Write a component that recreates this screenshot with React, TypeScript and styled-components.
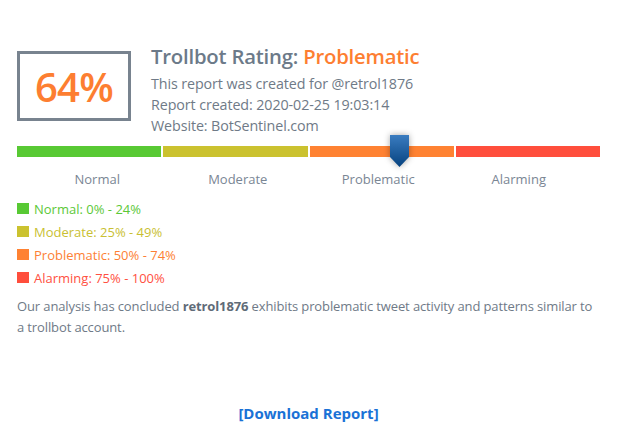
import React from "react";
import styled, { createGlobalStyle } from "styled-components";

const Global = createGlobalStyle`
  html, body { margin: 0; padding: 0; background: #ffffff; }
  body { font-family: "Open Sans", "Noto Sans", Arial, sans-serif; }
`;

const Page = styled.div`
  width: 619px;
  height: 447px;
  box-sizing: border-box;
  padding: 44px 19px 0 17px;
  background: #fff;
  color: #6f7a87;
`;

const Header = styled.div`
  display: flex;
  align-items: flex-start;
  gap: 20px;
`;

const ScoreBox = styled.div`
  margin-top: 7px;
  width: 114px;
  height: 70px;
  box-sizing: border-box;
  border: 3px solid #78838f;
  display: flex;
  align-items: center;
  justify-content: center;
  color: #fd7e31;
  font-size: 40px;
  font-weight: 600;
  letter-spacing: -0.8px;
`;

const Info = styled.div`
  display: flex;
  flex-direction: column;
`;

const Title = styled.div`
  font-size: 20.3px;
  line-height: 24px;
  font-weight: 600;
  color: #6c7a89;
  margin-bottom: 5px;
  letter-spacing: -0.2px;
`;

const Accent = styled.span`
  color: #fd7e31;
`;

const InfoLine = styled.div`
  font-size: 14.3px;
  line-height: 21px;
  color: #6f7a87;
  letter-spacing: -0.1px;
`;

const BarWrap = styled.div`
  position: relative;
  margin-top: 10px;
  display: grid;
  grid-template-columns: repeat(4, 1fr);
  gap: 2px;
  height: 11px;
`;

const Segment = styled.div<{ $c: string }>`
  background: ${(p) => p.$c};
`;

const Marker = styled.svg`
  position: absolute;
  left: 373px;
  top: -11px;
  width: 19px;
  height: 32px;
  overflow: visible;
  filter: drop-shadow(0 0 3px rgba(0, 0, 0, 0.35));
`;

const Labels = styled.div`
  display: grid;
  grid-template-columns: repeat(4, 1fr);
  padding: 0 11px 0 10px;
  margin-top: 12px;
`;

const Label = styled.div`
  text-align: center;
  font-size: 13px;
  line-height: 21px;
  color: #7a8694;
`;

const Legend = styled.div`
  margin-top: 7px;
  display: flex;
  flex-direction: column;
`;

const LegendRow = styled.div<{ $c: string; $t: string }>`
  display: flex;
  align-items: center;
  gap: 5px;
  height: 23px;
  font-size: 13px;
  color: ${(p) => p.$t};
  &::before {
    content: "";
    width: 12px;
    height: 11px;
    background: ${(p) => p.$c};
  }
`;

const Summary = styled.p`
  margin: 7px 0 0;
  font-size: 13px;
  line-height: 21px;
  color: #6f7a87;
  letter-spacing: -0.12px;
  strong {
    font-weight: 700;
    color: #5f6b78;
  }
`;

const Download = styled.a`
  display: block;
  margin-top: 65px;
  text-align: center;
  font-size: 15px;
  line-height: 20px;
  font-weight: 700;
  color: #1a72d6;
  text-decoration: none;
`;

const bands = [
  { name: "Normal", range: "0% - 24%", c: "#58c934", t: "#5cc838" },
  { name: "Moderate", range: "25% - 49%", c: "#cbc22f", t: "#c9c032" },
  { name: "Problematic", range: "50% - 74%", c: "#ff8232", t: "#fd7f34" },
  { name: "Alarming", range: "75% - 100%", c: "#ff4e3c", t: "#ff5042" },
];

export default function App() {
  return (
    <Page>
      <Global />
      <Header>
        <ScoreBox>64%</ScoreBox>
        <Info>
          <Title>
            Trollbot Rating: <Accent>Problematic</Accent>
          </Title>
          <InfoLine>This report was created for @retrol1876</InfoLine>
          <InfoLine>Report created: 2020-02-25 19:03:14</InfoLine>
          <InfoLine>Website: BotSentinel.com</InfoLine>
        </Info>
      </Header>
      <BarWrap>
        {bands.map((b) => (
          <Segment key={b.name} $c={b.c} />
        ))}
        <Marker viewBox="0 0 19 32">
          <defs>
            <linearGradient id="mk" x1="0" y1="0" x2="0" y2="1">
              <stop offset="0" stopColor="#3a7cc0" />
              <stop offset="1" stopColor="#06427f" />
            </linearGradient>
          </defs>
          <polygon points="0,0 19,0 19,22 9.5,32 0,22" fill="url(#mk)" />
        </Marker>
      </BarWrap>
      <Labels>
        {bands.map((b) => (
          <Label key={b.name}>{b.name}</Label>
        ))}
      </Labels>
      <Legend>
        {bands.map((b) => (
          <LegendRow key={b.name} $c={b.c} $t={b.t}>
            {b.name}: {b.range}
          </LegendRow>
        ))}
      </Legend>
      <Summary>
        Our analysis has concluded <strong>retrol1876</strong> exhibits problematic tweet activity and patterns similar to
        a trollbot account.
      </Summary>
      <Download href="#">[Download Report]</Download>
    </Page>
  );
}
